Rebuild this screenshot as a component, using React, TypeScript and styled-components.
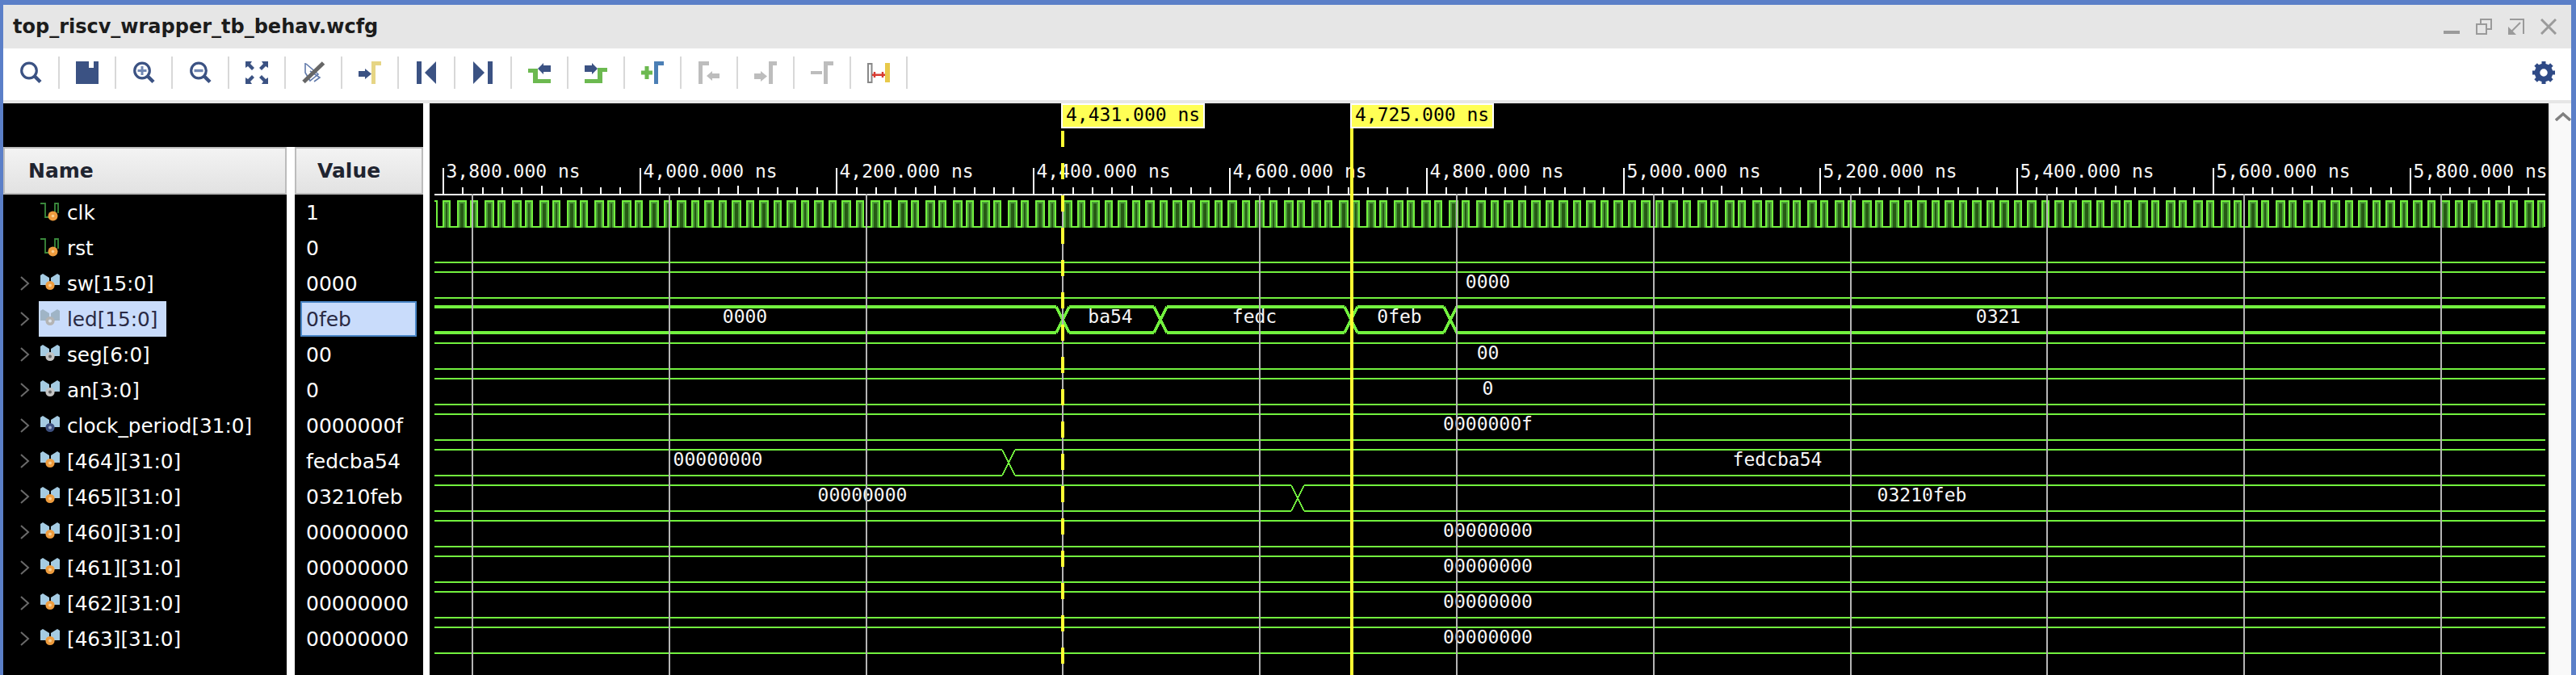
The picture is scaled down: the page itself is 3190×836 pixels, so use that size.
import React from "react";
import styled, { createGlobalStyle } from "styled-components";

const GlobalStyle = createGlobalStyle`
  html, body { margin: 0; padding: 0; background: #5b7fc8; }
  #root { width: 3190px; height: 836px; overflow: hidden; }
`;

const SANS = `"DejaVu Sans", "Liberation Sans", sans-serif`;
const MONO = `"DejaVu Sans Mono", "Liberation Mono", monospace`;

const Frame = styled.div`
  box-sizing: border-box;
  width: 3190px;
  height: 836px;
  padding: 6px 6px 0 4px;
  display: flex;
  flex-direction: column;
  background: #5b7fc8;
  font-family: ${SANS};
`;

const TitleBar = styled.div`
  height: 54px;
  flex: none;
  display: flex;
  align-items: center;
  justify-content: space-between;
  padding: 0 18px 0 12px;
  background: #e6e6e6;
`;

const Title = styled.div`
  font-size: 24px;
  font-weight: 700;
  color: #1c1c1c;
`;

const WindowControls = styled.div`
  display: flex;
  gap: 20px;
  align-items: center;
`;

const Toolbar = styled.div`
  box-sizing: border-box;
  height: 68px;
  flex: none;
  display: flex;
  align-items: center;
  padding: 0 20px 4px 0;
  background: #fff;
  border-bottom: 4px solid #e6e6e6;
`;

const Tool = styled.svg`
  display: block;
  flex: none;
  width: 28px;
  height: 28px;
  margin: 0 20px;
`;

const Sep = styled.div`
  flex: none;
  width: 2px;
  height: 40px;
  background: #d8d8d8;
`;

const GearSlot = styled.svg`
  display: block;
  width: 28px;
  height: 28px;
  margin-left: auto;
`;

const Main = styled.div`
  flex: 1;
  min-height: 0;
  display: flex;
  background: #fff;
`;

const LeftPane = styled.div`
  flex: none;
  width: 520px;
  display: flex;
  flex-direction: column;
`;

const BlackStrip = styled.div`
  flex: none;
  height: 54px;
  background: #000;
`;

const Columns = styled.div`
  flex: 1;
  display: grid;
  grid-template-columns: 351px 159px;
  grid-template-rows: 59px 1fr;
  column-gap: 10px;
`;

const HeaderCell = styled.div<{ $pad: number }>`
  box-sizing: border-box;
  padding-left: ${(p) => p.$pad}px;
  display: flex;
  align-items: center;
  font-size: 25px;
  font-weight: 700;
  color: #1f2430;
  background: linear-gradient(#f3f3f3, #e2e2e2);
  border: 2px solid #bcbcbc;
`;

const Column = styled.div`
  background: #000;
`;

const NameRow = styled.div`
  height: 44px;
  display: flex;
  align-items: center;
  padding-left: 20px;
`;

const ChevronSlot = styled.svg`
  flex: none;
  width: 14px;
  height: 18px;
  margin-right: 10px;
`;

const NameCell = styled.div<{ $selected?: boolean }>`
  height: 44px;
  display: flex;
  align-items: center;
  padding: 0 11px 0 2px;
  color: ${(p) => (p.$selected ? "#2a2a44" : "#fff")};
  background: ${(p) => (p.$selected ? "#c9dcfb" : "transparent")};
  font-size: 24.7px;
`;

const SignalIcon = styled.svg`
  flex: none;
  width: 24px;
  height: 24px;
  margin-right: 9px;
  margin-bottom: 2px;
`;

const ValueCell = styled.div<{ $selected?: boolean }>`
  box-sizing: border-box;
  height: 44px;
  width: 144px;
  margin-left: 7px;
  padding-left: 5px;
  display: flex;
  align-items: center;
  font-size: 25px;
  color: ${(p) => (p.$selected ? "#2a2a44" : "#fff")};
  background: ${(p) => (p.$selected ? "#c9dcfb" : "transparent")};
  border: 2px solid ${(p) => (p.$selected ? "#4a86c6" : "transparent")};
`;

const WavePane = styled.svg`
  flex: none;
  display: block;
  width: 2624px;
  height: 708px;
  margin-left: 8px;
  background: #000;
`;

const ScrollBar = styled.div`
  box-sizing: border-box;
  flex: 1;
  padding: 10px 0 0 6px;
  background: #f9f9f9;
  border-left: 2px solid #e9e9e9;
`;

const ScrollUp = styled.svg`
  display: block;
  width: 20px;
  height: 12px;
`;

const NAVY = "#3b5283";
const GRAY = "#bdbdbd";
const GREEN = "#6cb950";

const Ring = () => (
  <>
    <circle cx="12" cy="11.5" r="9.3" fill="none" stroke={NAVY} strokeWidth="3.2" />
    <path d="M19 18.5L26 25.5" stroke={NAVY} strokeWidth="4.5" />
  </>
);

const Gamma = ({ x, color }: { x: number; color: string }) => (
  <path d={`M${x} 0H28V5H${x + 5}V28H${x}Z`} fill={color} />
);

const tools: React.ReactNode[] = [
  <Ring key="a" />,
  <path key="a" d="M0 0H16V8H22V0H28V28H0Z" fill={NAVY} />,
  <g key="a">
    <Ring />
    <path d="M6.5 11.5H17.5M12 6V17" stroke="#7087b3" strokeWidth="3" />
  </g>,
  <g key="a">
    <Ring />
    <path d="M6.5 11.5H17.5" stroke="#7087b3" strokeWidth="3.4" />
  </g>,
  <g key="a" fill={NAVY}>
    <path d="M0 0H8L6 3L11 8L8 11L3 6L0 8Z" />
    <path d="M28 0H20L22 3L17 8L20 11L25 6L28 8Z" />
    <path d="M0 28H8L6 25L11 20L8 17L3 22L0 20Z" />
    <path d="M28 28H20L22 25L17 20L20 17L25 22L28 20Z" />
  </g>,
  <g key="a">
    <path d="M4 2V14L10 24L20 16L5 3M10 12L22 20L15 25" fill="none" stroke="#6079aa" strokeWidth="1.6" />
    <path d="M2 25.5L26.5 2" stroke="#666" strokeWidth="5" />
  </g>,
  <g key="a">
    <path d="M0 12H8V9L16 15.5L8 22V19H0Z" fill={NAVY} />
    <Gamma x={16} color="#e6d585" />
  </g>,
  <g key="a" fill={NAVY}>
    <rect x="2" y="0" width="6" height="28" />
    <path d="M12 14L26 0V28Z" />
  </g>,
  <g key="a" fill={NAVY}>
    <path d="M2 0L16 14L2 28Z" />
    <rect x="20" y="0" width="6" height="28" />
  </g>,
  <g key="a">
    <path d="M0 9H12V22H28V27H6V14H0Z" fill={GREEN} />
    <path d="M12 9L19 2V5H28V13H19V16Z" fill={NAVY} />
  </g>,
  <g key="a">
    <path d="M0 22H16V8H28V13H22V27H0Z" fill={GREEN} />
    <path d="M0 5H9V2L16 9L9 16V13H0Z" fill={NAVY} />
  </g>,
  <g key="a">
    <path d="M0 14H14M7 6V22" stroke={GREEN} strokeWidth="5" />
    <Gamma x={16} color="#4b7fb5" />
  </g>,
  <g key="a" fill={GRAY}>
    <path d="M1 0H14V5H6V28H1Z" />
    <path d="M11 18L18 12V15H27V21H18V24Z" />
  </g>,
  <g key="a" fill={GRAY}>
    <path d="M0 15H8V12L16 18.5L8 25V22H0Z" />
    <Gamma x={18} color={GRAY} />
  </g>,
  <g key="a" fill={GRAY}>
    <rect x="0" y="12" width="14" height="4" />
    <Gamma x={16} color={GRAY} />
  </g>,
  <g key="a">
    <rect x="1" y="3" width="4.5" height="23" fill="none" stroke="#888" strokeWidth="2" />
    <path d="M6 16.7H22M9 13V20M19 13V20" stroke="#d83a30" strokeWidth="2.4" />
    <rect x="22" y="2" width="6" height="24" fill="#e8c94a" />
  </g>,
];

const Gear = () => (
  <GearSlot viewBox="0 0 28 28">
    {[0, 45, 90, 135, 180, 225, 270, 315].map((a) => (
      <rect key={a} x="11.5" y="0" width="5" height="7" fill="#2f4a86" transform={`rotate(${a} 14 14)`} />
    ))}
    <circle cx="14" cy="14" r="8" fill="none" stroke="#2f4a86" strokeWidth="6.5" />
  </GearSlot>
);

const WinIcon = ({ children }: { children: React.ReactNode }) => (
  <svg width="20" height="20" viewBox="0 0 20 20" fill="none" stroke="#9a9a9a" strokeWidth="2">
    {children}
  </svg>
);

type Badge = "orange" | "gray" | "blue" | "pale";

const BADGE: Record<Badge, [string, string]> = {
  orange: ["#ee9c3e", "#f9cf94"],
  gray: ["#c4c4c4", "#666"],
  blue: ["#3d5080", "#9fb0d0"],
  pale: ["#b4b4b4", "#dde4ee"],
};

const BusGlyph = ({ badge }: { badge: Badge }) => (
  <SignalIcon viewBox="0 0 24 24">
    <path d="M0 3L3 1L11 6V15H0Z" fill={badge === "pale" ? "#9fb4c6" : "#a5cbe2"} />
    <path d="M24 3L21 1L13 6V15H24Z" fill={badge === "pale" ? "#9fb4c6" : "#a5cbe2"} />
    <circle cx="12" cy="15.5" r="5.6" fill={BADGE[badge][0]} />
    <circle cx="12" cy="15.5" r="2" fill={BADGE[badge][1]} />
  </SignalIcon>
);

const ScalarGlyph = () => (
  <SignalIcon viewBox="0 0 24 24">
    <path d="M0 2H6V19H11M18 17V2H22V14" fill="none" stroke="#3a8a3c" strokeWidth="1.8" />
    <circle cx="15.5" cy="17.5" r="6" fill="#ee9c3e" />
    <circle cx="15.5" cy="17.5" r="1.8" fill="#f9cf94" />
  </SignalIcon>
);

type Signal = { name: string; value: string; bus?: boolean; badge?: Badge; selected?: boolean };

const signals: Signal[] = [
  { name: "clk", value: "1" },
  { name: "rst", value: "0" },
  { name: "sw[15:0]", value: "0000", bus: true, badge: "orange" },
  { name: "led[15:0]", value: "0feb", bus: true, badge: "pale", selected: true },
  { name: "seg[6:0]", value: "00", bus: true, badge: "gray" },
  { name: "an[3:0]", value: "0", bus: true, badge: "gray" },
  { name: "clock_period[31:0]", value: "0000000f", bus: true, badge: "blue" },
  { name: "[464][31:0]", value: "fedcba54", bus: true, badge: "orange" },
  { name: "[465][31:0]", value: "03210feb", bus: true, badge: "orange" },
  { name: "[460][31:0]", value: "00000000", bus: true, badge: "orange" },
  { name: "[461][31:0]", value: "00000000", bus: true, badge: "orange" },
  { name: "[462][31:0]", value: "00000000", bus: true, badge: "orange" },
  { name: "[463][31:0]", value: "00000000", bus: true, badge: "orange" },
];

const WAVE = "#72f13e";
const X0 = 538;
const X1 = 3152;
const X_HALF = 8;
const tickX = (ns: number) => Math.round(549 + (ns - 3800) * 1.218);
const gridXs = Array.from({ length: 11 }, (_, i) => Math.round(585 + 243.8 * i));

const formatNs = (ns: number) =>
  `${Math.floor(ns / 1000)},${String(ns % 1000).padStart(3, "0")}.000 ns`;

const WaveLabel = styled.text<{ $ink?: string }>`
  font-family: ${MONO};
  font-size: 23px;
  fill: ${(p) => p.$ink ?? "#f6f6f6"};
`;

const Ruler = () => {
  const minors: number[] = [];
  for (let ns = 3800; tickX(ns) <= X1; ns += 20) minors.push(ns);
  return (
    <g shapeRendering="crispEdges">
      <rect x={X0} y="240" width={X1 - X0} height="2" fill="#fff" />
      {minors.map((ns) => {
        const top = ns % 200 === 0 ? 208 : ns % 100 === 0 ? 230 : 232;
        return <rect key={ns} x={tickX(ns) - 1} y={top} width="2" height={241 - top} fill="#fff" />;
      })}
      {Array.from({ length: 11 }, (_, i) => 3800 + i * 200).map((ns) => (
        <WaveLabel key={ns} x={tickX(ns) + 3.5} y="220">
          {formatNs(ns)}
        </WaveLabel>
      ))}
    </g>
  );
};

const Clock = () => {
  const pulses: [number, number][] = [];
  for (let k = 0; ; k++) {
    const r = Math.round((548 + 17.067 * k) / 2) * 2;
    if (r > X1) break;
    pulses.push([r, r + (k % 2 === 0 ? 10 : 12)]);
  }
  let d = `M${X0} 249H541V281`;
  pulses.forEach(([r, f]) => {
    d += `H${r + 1}V249H${f - 1}V281`;
  });
  return (
    <g clipPath="url(#waveClip)" shapeRendering="crispEdges">
      <path d={d} fill="none" stroke={WAVE} strokeWidth="2" />
      {pulses.map(([r, f]) => (
        <g key={r}>
          <rect x={r + 2} y="250" width={f - r - 4} height="32" fill="#4b9a38" />
          <rect x={r + 4} y="252" width={f - r - 8} height="30" fill="#265a14" />
        </g>
      ))}
    </g>
  );
};

type BusProps = { top: number; cross?: number[]; labels: string[]; thick?: boolean };

const Bus = ({ top, cross = [], labels, thick }: BusProps) => {
  const bottom = top + 32;
  const edges = [X0 - X_HALF, ...cross, X1 + X_HALF];
  const mid = top + 16;
  let d = "";
  for (let i = 0; i < edges.length - 1; i++) {
    const a = edges[i] + X_HALF;
    const b = edges[i + 1] - X_HALF;
    d += `M${a} ${top}H${b}M${a} ${bottom}H${b}`;
  }
  cross.forEach((c) => {
    d += `M${c - X_HALF} ${top}L${c + X_HALF} ${bottom}M${c + X_HALF} ${top}L${c - X_HALF} ${bottom}`;
  });
  return (
    <g>
      <path d={d} fill="none" stroke={WAVE} strokeWidth={thick ? 4 : 2} shapeRendering="crispEdges" />
      {labels.map((t, i) => (
        <WaveLabel key={i} x={(Math.max(edges[i], 532) + Math.min(edges[i + 1], 3156)) / 2 - 1.5} y={mid + 4} textAnchor="middle">
          {t}
        </WaveLabel>
      ))}
    </g>
  );
};

const Marker = ({ x, text }: { x: number; text: string }) => (
  <g>
    <rect x={x + 1} y="129" width="176" height="29" fill="#ffff55" stroke="#fff" strokeWidth="2" shapeRendering="crispEdges" />
    <WaveLabel x={x + 6} y="150" $ink="#000">
      {text}
    </WaveLabel>
  </g>
);

const Waves = () => (
  <WavePane viewBox="532 128 2624 708">
    <defs>
      <clipPath id="waveClip">
        <rect x={X0} y="240" width={X1 - X0} height="60" />
      </clipPath>
    </defs>
    <Ruler />
    <Clock />
    <rect x={X0} y="324" width={X1 - X0} height="2" fill={WAVE} />
    <Bus top={337} labels={["0000"]} />
    <Bus top={380} cross={[1316, 1437, 1673, 1796]} labels={["0000", "ba54", "fedc", "0feb", "0321"]} thick />
    <Bus top={425} labels={["00"]} />
    <Bus top={469} labels={["0"]} />
    <Bus top={513} labels={["0000000f"]} />
    <Bus top={557} cross={[1249]} labels={["00000000", "fedcba54"]} />
    <Bus top={601} cross={[1607]} labels={["00000000", "03210feb"]} />
    <Bus top={645} labels={["00000000"]} />
    <Bus top={689} labels={["00000000"]} />
    <Bus top={733} labels={["00000000"]} />
    <Bus top={777} labels={["00000000"]} />
    {gridXs.map((x) => (
      <rect key={x} x={x - 1} y="240" width="2" height="596" fill="#b5b5b5" shapeRendering="crispEdges" />
    ))}
    {Array.from({ length: 17 }, (_, i) => 162 + i * 40).map((y) => (
      <rect key={y} x="1314" y={y} width="4" height="20" fill="#ffff33" shapeRendering="crispEdges" />
    ))}
    <rect x="1672" y="159" width="4" height="677" fill="#ffff33" shapeRendering="crispEdges" />
    <Marker x={1314} text="4,431.000 ns" />
    <Marker x={1672} text="4,725.000 ns" />
  </WavePane>
);

export default function App() {
  return (
    <Frame>
      <GlobalStyle />
      <TitleBar>
        <Title>top_riscv_wrapper_tb_behav.wcfg</Title>
        <WindowControls>
          <WinIcon>
            <path d="M0 17H20" strokeWidth="4" />
          </WinIcon>
          <WinIcon>
            <rect x="6" y="1" width="13" height="12" />
            <rect x="1" y="7" width="12" height="12" fill="#e6e6e6" />
          </WinIcon>
          <WinIcon>
            <path d="M2 1H19V19M15 5L4 16" />
            <path d="M0 20V10L10 20Z" fill="#9a9a9a" stroke="none" />
          </WinIcon>
          <WinIcon>
            <path d="M1 1L19 19M19 1L1 19" strokeWidth="3" />
          </WinIcon>
        </WindowControls>
      </TitleBar>
      <Toolbar>
        {tools.map((t, i) => (
          <React.Fragment key={i}>
            <Tool viewBox="0 0 28 28">{t}</Tool>
            <Sep />
          </React.Fragment>
        ))}
        <Gear />
      </Toolbar>
      <Main>
        <LeftPane>
          <BlackStrip />
          <Columns>
            <HeaderCell $pad={29}>Name</HeaderCell>
            <HeaderCell $pad={26}>Value</HeaderCell>
            <Column>
              {signals.map((s) => (
                <NameRow key={s.name}>
                  <ChevronSlot viewBox="0 0 14 18">
                    {s.bus && <path d="M2 1L11 9L2 17" fill="none" stroke="#6a6a6a" strokeWidth="2" />}
                  </ChevronSlot>
                  <NameCell $selected={s.selected}>
                    {s.bus ? <BusGlyph badge={s.badge ?? "orange"} /> : <ScalarGlyph />}
                    {s.name}
                  </NameCell>
                </NameRow>
              ))}
            </Column>
            <Column>
              {signals.map((s) => (
                <ValueCell key={s.name} $selected={s.selected}>
                  {s.value}
                </ValueCell>
              ))}
            </Column>
          </Columns>
        </LeftPane>
        <Waves />
        <ScrollBar>
          <ScrollUp viewBox="0 0 20 12">
            <path d="M1 11L10 3L19 11" fill="none" stroke="#808080" strokeWidth="3.5" />
          </ScrollUp>
        </ScrollBar>
      </Main>
    </Frame>
  );
}
